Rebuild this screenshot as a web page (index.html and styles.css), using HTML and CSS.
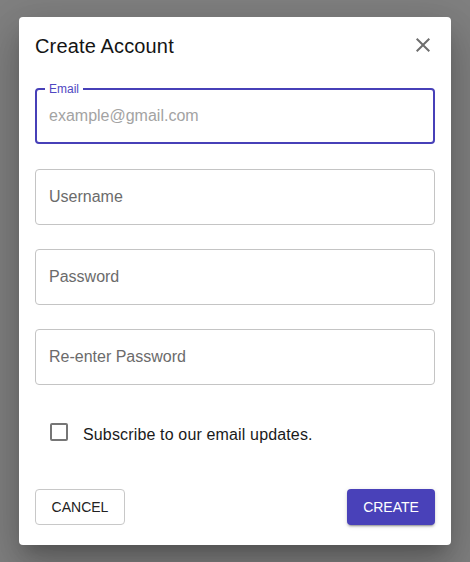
FILE: index.html
```html
<!DOCTYPE html>
<html lang="en">
<head>
<meta charset="utf-8">
<title>Create Account</title>
<link rel="stylesheet" href="styles.css">
</head>
<body>
<div class="dialog" role="dialog" aria-labelledby="dlg-title">
  <div class="header">
    <h2 class="title" id="dlg-title">Create Account</h2>
    <button class="close" aria-label="close">
      <svg viewBox="0 0 24 24" width="24" height="24" aria-hidden="true"><path d="M19 6.41 17.59 5 12 10.59 6.41 5 5 6.41 10.59 12 5 17.59 6.41 19 12 13.41 17.59 19 19 17.59 13.41 12z"/></svg>
    </button>
  </div>
  <form class="form">
    <div class="field field-focused">
      <span class="field-label">Email</span>
      <input class="input input-hint" type="email" placeholder="example@gmail.com">
    </div>
    <div class="field">
      <input class="input" type="text" placeholder="Username">
    </div>
    <div class="field">
      <input class="input" type="password" placeholder="Password">
    </div>
    <div class="field">
      <input class="input" type="password" placeholder="Re-enter Password">
    </div>
    <label class="check-row">
      <span class="check-box"></span>
      <span class="check-text">Subscribe to our email updates.</span>
    </label>
  </form>
  <div class="actions">
    <button class="btn btn-outline">CANCEL</button>
    <button class="btn btn-primary">CREATE</button>
  </div>
</div>
</body>
</html>
```
FILE: styles.css
```css
html, body {
  margin: 0;
  padding: 0;
}
body {
  width: 470px;
  height: 562px;
  background: #808080;
  font-family: "Liberation Sans", Arial, Helvetica, sans-serif;
  overflow: hidden;
}
.dialog {
  box-sizing: border-box;
  width: 432px;
  height: 528px;
  margin: 17px 0 0 19px;
  padding: 14px 16px 20px;
  background: #fff;
  border-radius: 4px;
  display: flex;
  flex-direction: column;
  box-shadow: 0 11px 15px -7px rgba(0,0,0,0.2), 0 24px 38px 3px rgba(0,0,0,0.14), 0 9px 46px 8px rgba(0,0,0,0.12);
}
.header {
  display: flex;
  justify-content: space-between;
  align-items: flex-start;
}
.title {
  margin: 0;
  font-size: 20px;
  font-weight: 400;
  line-height: 30px;
  letter-spacing: 0.15px;
  color: #141414;
}
.close {
  margin: 2px 0 0;
  padding: 0;
  border: 0;
  background: none;
  width: 24px;
  height: 24px;
  display: flex;
}
.close svg {
  fill: #6e6e6e;
}
.form {
  margin: 27px 0 0;
  display: flex;
  flex-direction: column;
}
.field {
  position: relative;
  box-sizing: border-box;
  height: 56px;
  border: 1px solid #c4c4c4;
  border-radius: 4px;
  margin-bottom: 24px;
  display: flex;
  align-items: center;
  padding: 0 13px;
}
.field-focused {
  border: 2px solid #4740b8;
  padding: 0 12px;
  margin-bottom: 25px;
}
.field-label {
  position: absolute;
  top: -8px;
  left: 8px;
  padding: 0 4px;
  background: #fff;
  font-size: 12px;
  line-height: 14px;
  color: #5047c2;
}
.input {
  width: 100%;
  border: 0;
  outline: none;
  padding: 0;
  margin: 0;
  font-family: inherit;
  font-size: 16px;
  line-height: 20px;
  color: #222;
  background: transparent;
}
.input::placeholder {
  color: #6b6b6b;
  opacity: 1;
}
.input-hint::placeholder {
  color: #a3a3a3;
}
.check-row {
  margin-top: 2px;
  height: 42px;
  display: flex;
  align-items: center;
  padding-left: 15px;
}
.check-box {
  box-sizing: border-box;
  width: 18px;
  height: 18px;
  border: 2px solid #767676;
  border-radius: 2px;
  margin-right: 15px;
}
.check-text {
  font-size: 16px;
  line-height: 24px;
  letter-spacing: 0.15px;
  color: #1a1a1a;
  margin-top: 5px;
}
.actions {
  margin-top: auto;
  display: flex;
  justify-content: space-between;
}
.btn {
  box-sizing: border-box;
  height: 36px;
  border-radius: 4px;
  font-family: inherit;
  font-size: 14px;
  line-height: 16px;
  padding: 0;
  cursor: pointer;
}
.btn-outline {
  width: 90px;
  background: #fff;
  border: 1px solid #c8c8c8;
  color: #222;
}
.btn-primary {
  width: 88px;
  background: #4941b9;
  border: 0;
  color: #fff;
  box-shadow: 0 3px 1px -2px rgba(0,0,0,0.2), 0 2px 2px 0 rgba(0,0,0,0.14), 0 1px 5px 0 rgba(0,0,0,0.12);
}
```
